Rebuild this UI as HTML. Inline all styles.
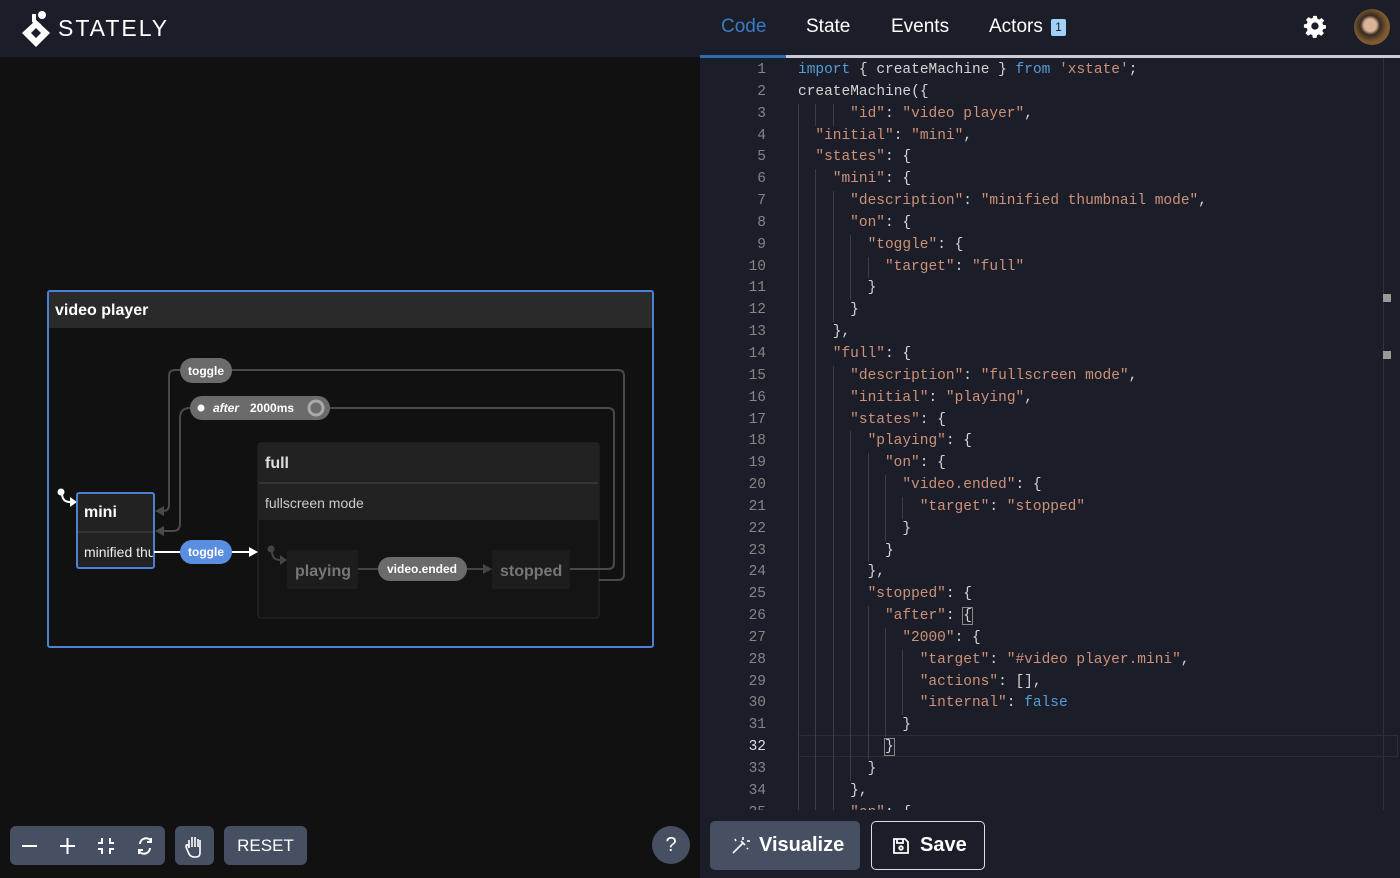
<!DOCTYPE html>
<html><head><meta charset="utf-8"><style>
*{margin:0;padding:0;box-sizing:border-box}
body{width:1400px;height:878px;overflow:hidden;background:#111;font-family:"Liberation Sans",sans-serif;position:relative}
.lh{position:absolute;left:0;top:0;width:700px;height:57px;background:#1b1e28}
.rp{position:absolute;left:700px;top:0;width:700px;height:878px;background:#1b1e28}
.tab{position:absolute;top:16px;font-size:19px;color:#fff}
.code{position:absolute;left:700px;top:57px;width:690px;height:753px;overflow:hidden;font-family:"Liberation Mono",monospace;font-size:14.5px}
.inner{position:absolute;left:0;top:0;width:690px}
.ln{height:21.85px;line-height:21.85px;white-space:pre;position:relative}
.ln .n{position:absolute;left:0;width:66px;text-align:right;color:#858585}
.ln .c{position:absolute;left:98px;color:#d4d4d4}
.g{display:inline-block;width:17.4px;height:21.85px;vertical-align:top;border-left:1px solid #3a3d45}
.s{color:#ce9178}.k{color:#569cd6}
.btn{position:absolute;background:#475063;border-radius:6px;color:#fff}
</style></head><body>
<div class="lh"></div>
<svg style="position:absolute;left:20px;top:10px" width="34" height="38" viewBox="0 0 34 38">
<path d="M16 10 L30 23 L16 37 L2 23 Z M16 18 L11 23 L16 28 L21 23 Z" fill="#fff" fill-rule="evenodd"/>
<path d="M14 4 L14 11 L20 16" stroke="#fff" stroke-width="4" fill="none"/>
<circle cx="22" cy="5" r="4" fill="#fff"/>
</svg>
<div style="position:absolute;left:58px;top:15px;color:#fff;font-size:23px;letter-spacing:2px">STATELY</div>

<svg style="position:absolute;left:0;top:57px" width="700" height="821" viewBox="0 57 700 821" font-family="Liberation Sans, sans-serif">
<rect x="48" y="291" width="605" height="356" fill="#111" stroke="#4b80d4" stroke-width="2" rx="2"/>
<rect x="49" y="292" width="603" height="36" fill="#2a2a2a"/>
<text x="55" y="315" fill="#fff" font-size="16" font-weight="bold">video player</text>
<rect x="258" y="443" width="341" height="175" fill="#141414" stroke="#2a2a2a" rx="3"/>
<rect x="258" y="443" width="341" height="77" fill="#222"/>
<line x1="259" y1="483" x2="598" y2="483" stroke="#3a3a3a" stroke-width="1.5"/>
<text x="265" y="468" fill="#ddd" font-size="16" font-weight="bold">full</text>
<text x="265" y="508" fill="#ccc" font-size="14">fullscreen mode</text>
<path d="M230 370 L618 370 Q624 370 624 376 L624 574 Q624 580 618 580 L599 580" stroke="#4a4a4a" stroke-width="2" fill="none"/>
<path d="M180 370 L175 370 Q169 370 169 376 L169 505 Q169 511 163 511 L160 511" stroke="#4a4a4a" stroke-width="2" fill="none"/>
<path d="M330 408 L608 408 Q614 408 614 414 L614 563 Q614 569 608 569 L570 569" stroke="#4a4a4a" stroke-width="2" fill="none"/>
<path d="M190 408 Q180 408 180 418 L180 524 Q180 531 173 531 L160 531" stroke="#4a4a4a" stroke-width="2" fill="none"/>
<path d="M155 511 L164 506 L164 516 Z M155 531 L164 526 L164 536 Z" fill="#4a4a4a"/>
<rect x="180" y="358" width="52" height="25" rx="12.5" fill="#6b6b6b"/>
<text x="206" y="375" fill="#fff" font-size="12" font-weight="bold" text-anchor="middle">toggle</text>
<rect x="190" y="396" width="140" height="24" rx="12" fill="#6b6b6b"/>
<circle cx="201" cy="408" r="3.5" fill="#fff"/>
<text x="213" y="412" fill="#fff" font-size="12" font-weight="bold" font-style="italic">after</text>
<text x="250" y="412" fill="#fff" font-size="12" font-weight="bold">2000ms</text>
<circle cx="316" cy="408" r="7" fill="none" stroke="#aaa" stroke-width="3"/>
<path d="M62 493 Q62 502 70 502 L74 502" stroke="#fff" stroke-width="2" fill="none"/>
<circle cx="61" cy="492" r="3.5" fill="#fff"/>
<path d="M77 502 L70 497 L70 507 Z" fill="#fff"/>
<rect x="77" y="493" width="77" height="75" fill="#222" stroke="#4b80d4" stroke-width="2" rx="2"/>
<line x1="78" y1="532" x2="153" y2="532" stroke="#3a3a3a" stroke-width="1.5"/>
<text x="84" y="517" fill="#fff" font-size="16" font-weight="bold">mini</text>
<clipPath id="cm"><rect x="78" y="533" width="75" height="34"/></clipPath>
<text x="84" y="557" fill="#eee" font-size="14" clip-path="url(#cm)">minified thumbnail</text>
<line x1="154" y1="552" x2="250" y2="552" stroke="#fff" stroke-width="2"/>
<path d="M258 552 L249 547 L249 557 Z" fill="#fff"/>
<rect x="180" y="540" width="52" height="24" rx="12" fill="#5a8ee0"/>
<text x="206" y="556" fill="#fff" font-size="12" font-weight="bold" text-anchor="middle">toggle</text>
<path d="M272 551 Q272 560 280 560 L283 560" stroke="#444" stroke-width="2" fill="none"/>
<circle cx="271" cy="549" r="3.5" fill="#444"/>
<path d="M287 560 L280 555 L280 565 Z" fill="#444"/>
<rect x="287" y="550" width="71" height="39" fill="#1d1d1d" rx="2"/>
<text x="295" y="576" fill="#777" font-size="16" font-weight="bold">playing</text>
<line x1="358" y1="569" x2="485" y2="569" stroke="#444" stroke-width="2"/>
<path d="M492 569 L483 564 L483 574 Z" fill="#444"/>
<rect x="378" y="557" width="89" height="24" rx="12" fill="#6b6b6b"/>
<text x="422" y="573" fill="#fff" font-size="12" font-weight="bold" text-anchor="middle">video.ended</text>
<rect x="492" y="550" width="78" height="39" fill="#1d1d1d" rx="2"/>
<text x="500" y="576" fill="#777" font-size="16" font-weight="bold">stopped</text>
</svg>

<div class="btn" style="left:10px;top:826px;width:155px;height:39px"></div>
<svg style="position:absolute;left:10px;top:826px" width="155" height="39" stroke="#fff" stroke-width="2" fill="none">
<line x1="12" y1="20" x2="27" y2="20"/>
<line x1="50" y1="20" x2="65" y2="20"/><line x1="57.5" y1="12" x2="57.5" y2="28"/>
<path d="M92 12 V17 H88 M100 12 V17 H104 M92 28 V23 H88 M100 28 V23 H104"/>
<path d="M141 15 A6 6 0 0 0 130 18 M129 25 A6 6 0 0 0 140 22"/><path d="M141 12 V16 H137 M129 28 V24 H133"/>
</svg>
<div class="btn" style="left:175px;top:826px;width:39px;height:39px"></div>
<svg style="position:absolute;left:175px;top:826px" width="39" height="39" stroke="#fff" stroke-width="1.6" fill="none"><path d="M14 22 V14 M17 21 V11 M20 21 V11 M23 21 V13 M14 22 L13 19 Q11 18 11 21 L14 28 Q16 31 19 31 L21 31 Q25 31 25 27 V14"/></svg>
<div class="btn" style="left:224px;top:826px;width:83px;height:39px;font-size:17px;line-height:39px;text-align:center">RESET</div>
<div class="btn" style="left:652px;top:826px;width:38px;height:38px;border-radius:50%;font-size:20px;line-height:38px;text-align:center">?</div>

<div class="rp"></div>
<div class="tab" style="left:721px;color:#3b7bc4">Code</div>
<div class="tab" style="left:806px">State</div>
<div class="tab" style="left:891px">Events</div>
<div class="tab" style="left:989px">Actors</div>
<div style="position:absolute;left:1051px;top:19px;width:15px;height:17px;background:#9fd2f5;border-radius:2px;color:#123;font-size:12px;text-align:center;line-height:17px">1</div>
<svg style="position:absolute;left:1303px;top:15px" width="24" height="24" viewBox="0 0 24 24"><path fill="#fff" fill-rule="evenodd" d="M10 2h4l.6 3 2 1 2.6-1.7 2.8 2.8L20 9.7l.9 2L24 12.3v3.4l-3 .6-1 2 1.7 2.6-2.8 2.8L16.3 22l-2 .9-.6 3h-4l-.6-3-2-1-2.6 1.7-2.8-2.8L4 17.3l-.9-2L0 14.7v-3.4l3-.6 1-2L2.3 6.1 5.1 3.3 7.7 5l2-.9z M12 9a4 4 0 1 0 0 8 4 4 0 1 0 0-8z" transform="scale(.92) translate(1,-1)"/></svg>
<div style="position:absolute;left:1354px;top:9px;width:36px;height:36px;border-radius:50%;background:radial-gradient(circle at 45% 45%,#d9b49a 0 22%,#3a2a20 35%,#7a5a30 60%,#a0602a 100%)"></div>
<div style="position:absolute;left:700px;top:55px;width:700px;height:3px;background:#c9ccd4"></div>
<div style="position:absolute;left:700px;top:55px;width:86px;height:3px;background:#2d6bb5"></div>
<div style="position:absolute;left:1383px;top:58px;width:1px;height:752px;background:#2e323c"></div>
<div style="position:absolute;left:1383px;top:294px;width:8px;height:8px;background:#999"></div>
<div style="position:absolute;left:1383px;top:351px;width:8px;height:8px;background:#999"></div>
<div style="position:absolute;left:798px;top:735px;width:600px;height:22px;border:1px solid #2a2d33"></div>

<div class="code"><div class="inner" style="top:3px">
<div class="ln"><span class="n">1</span><span class="c"><span class="k">import</span> { createMachine } <span class="k">from</span> <span class="s">'xstate'</span>;</span></div>
<div class="ln"><span class="n">2</span><span class="c">createMachine({</span></div>
<div class="ln"><span class="n">3</span><span class="c"><span class="g"></span><span class="g"></span><span class="g"></span><span class="s">"id"</span>: <span class="s">"video player"</span>,</span></div>
<div class="ln"><span class="n">4</span><span class="c"><span class="g"></span><span class="s">"initial"</span>: <span class="s">"mini"</span>,</span></div>
<div class="ln"><span class="n">5</span><span class="c"><span class="g"></span><span class="s">"states"</span>: {</span></div>
<div class="ln"><span class="n">6</span><span class="c"><span class="g"></span><span class="g"></span><span class="s">"mini"</span>: {</span></div>
<div class="ln"><span class="n">7</span><span class="c"><span class="g"></span><span class="g"></span><span class="g"></span><span class="s">"description"</span>: <span class="s">"minified thumbnail mode"</span>,</span></div>
<div class="ln"><span class="n">8</span><span class="c"><span class="g"></span><span class="g"></span><span class="g"></span><span class="s">"on"</span>: {</span></div>
<div class="ln"><span class="n">9</span><span class="c"><span class="g"></span><span class="g"></span><span class="g"></span><span class="g"></span><span class="s">"toggle"</span>: {</span></div>
<div class="ln"><span class="n">10</span><span class="c"><span class="g"></span><span class="g"></span><span class="g"></span><span class="g"></span><span class="g"></span><span class="s">"target"</span>: <span class="s">"full"</span></span></div>
<div class="ln"><span class="n">11</span><span class="c"><span class="g"></span><span class="g"></span><span class="g"></span><span class="g"></span>}</span></div>
<div class="ln"><span class="n">12</span><span class="c"><span class="g"></span><span class="g"></span><span class="g"></span>}</span></div>
<div class="ln"><span class="n">13</span><span class="c"><span class="g"></span><span class="g"></span>},</span></div>
<div class="ln"><span class="n">14</span><span class="c"><span class="g"></span><span class="g"></span><span class="s">"full"</span>: {</span></div>
<div class="ln"><span class="n">15</span><span class="c"><span class="g"></span><span class="g"></span><span class="g"></span><span class="s">"description"</span>: <span class="s">"fullscreen mode"</span>,</span></div>
<div class="ln"><span class="n">16</span><span class="c"><span class="g"></span><span class="g"></span><span class="g"></span><span class="s">"initial"</span>: <span class="s">"playing"</span>,</span></div>
<div class="ln"><span class="n">17</span><span class="c"><span class="g"></span><span class="g"></span><span class="g"></span><span class="s">"states"</span>: {</span></div>
<div class="ln"><span class="n">18</span><span class="c"><span class="g"></span><span class="g"></span><span class="g"></span><span class="g"></span><span class="s">"playing"</span>: {</span></div>
<div class="ln"><span class="n">19</span><span class="c"><span class="g"></span><span class="g"></span><span class="g"></span><span class="g"></span><span class="g"></span><span class="s">"on"</span>: {</span></div>
<div class="ln"><span class="n">20</span><span class="c"><span class="g"></span><span class="g"></span><span class="g"></span><span class="g"></span><span class="g"></span><span class="g"></span><span class="s">"video.ended"</span>: {</span></div>
<div class="ln"><span class="n">21</span><span class="c"><span class="g"></span><span class="g"></span><span class="g"></span><span class="g"></span><span class="g"></span><span class="g"></span><span class="g"></span><span class="s">"target"</span>: <span class="s">"stopped"</span></span></div>
<div class="ln"><span class="n">22</span><span class="c"><span class="g"></span><span class="g"></span><span class="g"></span><span class="g"></span><span class="g"></span><span class="g"></span>}</span></div>
<div class="ln"><span class="n">23</span><span class="c"><span class="g"></span><span class="g"></span><span class="g"></span><span class="g"></span><span class="g"></span>}</span></div>
<div class="ln"><span class="n">24</span><span class="c"><span class="g"></span><span class="g"></span><span class="g"></span><span class="g"></span>},</span></div>
<div class="ln"><span class="n">25</span><span class="c"><span class="g"></span><span class="g"></span><span class="g"></span><span class="g"></span><span class="s">"stopped"</span>: {</span></div>
<div class="ln"><span class="n">26</span><span class="c"><span class="g"></span><span class="g"></span><span class="g"></span><span class="g"></span><span class="g"></span><span class="s">"after"</span>: <span style="outline:1px solid #888">{</span></span></div>
<div class="ln"><span class="n">27</span><span class="c"><span class="g"></span><span class="g"></span><span class="g"></span><span class="g"></span><span class="g"></span><span class="g"></span><span class="s">"2000"</span>: {</span></div>
<div class="ln"><span class="n">28</span><span class="c"><span class="g"></span><span class="g"></span><span class="g"></span><span class="g"></span><span class="g"></span><span class="g"></span><span class="g"></span><span class="s">"target"</span>: <span class="s">"#video player.mini"</span>,</span></div>
<div class="ln"><span class="n">29</span><span class="c"><span class="g"></span><span class="g"></span><span class="g"></span><span class="g"></span><span class="g"></span><span class="g"></span><span class="g"></span><span class="s">"actions"</span>: [],</span></div>
<div class="ln"><span class="n">30</span><span class="c"><span class="g"></span><span class="g"></span><span class="g"></span><span class="g"></span><span class="g"></span><span class="g"></span><span class="g"></span><span class="s">"internal"</span>: <span class="k">false</span></span></div>
<div class="ln"><span class="n">31</span><span class="c"><span class="g"></span><span class="g"></span><span class="g"></span><span class="g"></span><span class="g"></span><span class="g"></span>}</span></div>
<div class="ln"><span class="n" style="color:#ddd">32</span><span class="c"><span class="g"></span><span class="g"></span><span class="g"></span><span class="g"></span><span class="g"></span><span style="outline:1px solid #888">}</span></span></div>
<div class="ln"><span class="n">33</span><span class="c"><span class="g"></span><span class="g"></span><span class="g"></span><span class="g"></span>}</span></div>
<div class="ln"><span class="n">34</span><span class="c"><span class="g"></span><span class="g"></span><span class="g"></span>},</span></div>
<div class="ln"><span class="n">35</span><span class="c"><span class="g"></span><span class="g"></span><span class="g"></span><span class="s">"on"</span>: {</span></div>
</div></div>

<div style="position:absolute;left:710px;top:821px;width:150px;height:49px;background:#475063;border-radius:5px;color:#fff;font-size:20px;font-weight:bold;line-height:49px;padding-left:49px">Visualize</div>
<svg style="position:absolute;left:730px;top:835px" width="20" height="20" stroke="#fff" stroke-width="1.6" fill="none"><path d="M3 18 L13 8 M11 6 L15 10"/><path d="M13 2 V5 M17 6 H20 M5 4 L6 6 M17 13 L18 14"/></svg>
<div style="position:absolute;left:871px;top:821px;width:114px;height:49px;border:1.5px solid #ddd;border-radius:5px;color:#fff;font-size:20px;font-weight:bold;line-height:46px;padding-left:48px">Save</div>
<svg style="position:absolute;left:892px;top:837px" width="18" height="18" stroke="#fff" stroke-width="1.8" fill="none"><path d="M2 2 H13 L16 5 V16 H2 Z M5 2 V6 H11 V2"/><circle cx="9" cy="11" r="1.8"/></svg>
</body></html>
